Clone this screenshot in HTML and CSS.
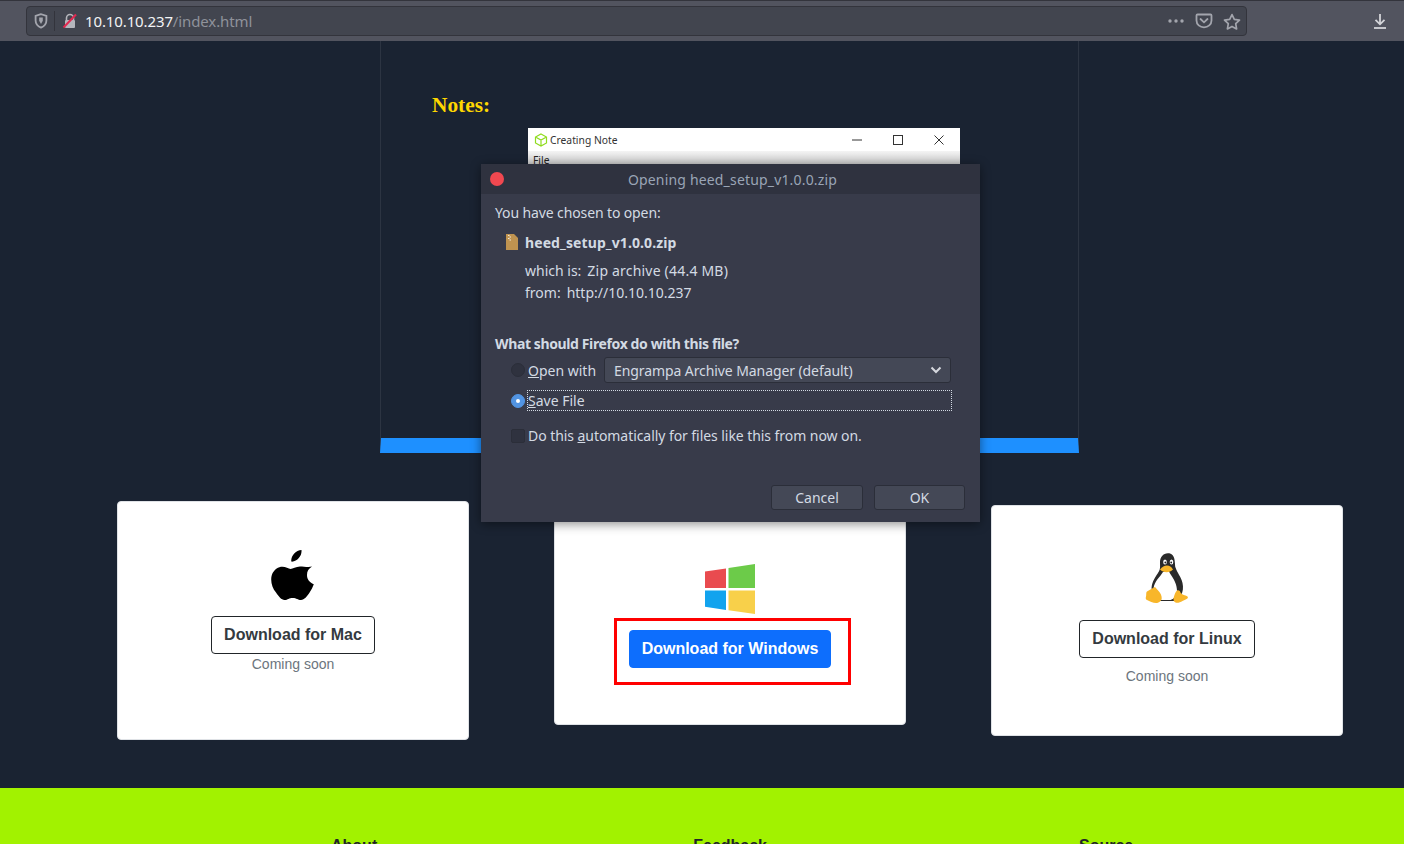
FILE: index.html
```html
<!DOCTYPE html>
<html lang="en">
<head>
	<meta charset="UTF-8">
	<title>10.10.10.237/index.html</title>
	<link rel="stylesheet" href="styles.css">
</head>
<body>
	<div class="toolbar">
		<div class="urlbar">
			<span class="url-icon">
				<svg width="14" height="16" viewBox="0 0 14 16"><path d="M7 1.200 1.600 2.800v4.600c0 3.400 2.300 5.800 5.400 7.200 3.100-1.400 5.400-3.800 5.400-7.200V2.800z" fill="none" stroke="#a3a5ad" stroke-width="1.800"/><path d="M5.200 4.600h3.600v3.200L7 11 5.200 7.800z" fill="#a3a5ad"/></svg>
			</span>
			<span class="url-sep"></span>
			<span class="url-lock">
				<svg width="16" height="16" viewBox="0 0 16 16"><path d="M4.500 7V5a3.500 3.500 0 0 1 7 0v2" fill="none" stroke="#b5b6bc" stroke-width="1.600"/><rect x="3" y="7" width="10" height="8" rx="1" fill="#b5b6bc"/><path d="M1.500 14.500 14 1.500" stroke="#e22850" stroke-width="2"/></svg>
			</span>
			<span class="url-text">10.10.10.237<span class="url-path">/index.html</span></span>
			<span class="url-actions">
				<svg width="18" height="16" viewBox="0 0 18 16"><circle cx="3" cy="8" r="1.700" fill="#a3a5ad"/><circle cx="9" cy="8" r="1.700" fill="#a3a5ad"/><circle cx="15" cy="8" r="1.700" fill="#a3a5ad"/></svg>
				<svg width="18" height="16" viewBox="0 0 18 16"><path d="M2.500 1.500h13c.6 0 1 .4 1 1v5c0 4-3.400 6.800-7.500 6.800S1.500 11.500 1.500 7.500v-5c0-.6.400-1 1-1z" fill="none" stroke="#a3a5ad" stroke-width="1.800"/><path d="M5.500 6 9 9.300 12.500 6" fill="none" stroke="#a3a5ad" stroke-width="1.800" stroke-linecap="round"/></svg>
				<svg width="18" height="17" viewBox="0 0 18 17"><path d="m9 1.600 2.300 4.800 5.200.7-3.800 3.600.9 5.200L9 13.400l-4.600 2.500.9-5.200L1.500 7.100l5.200-.7z" fill="none" stroke="#a3a5ad" stroke-width="1.700" stroke-linejoin="round"/></svg>
			</span>
		</div>
		<span class="download-btn">
			<svg width="14" height="16" viewBox="0 0 14 16"><path d="M7 1v10M2.500 6.800 7 11.300l4.500-4.500" fill="none" stroke="#d4d5d9" stroke-width="1.800"/><path d="M1 15h12" stroke="#d4d5d9" stroke-width="1.800"/></svg>
		</span>
	</div>

	<div class="page">
		<div class="notes">
			<h3 class="notes-title">Notes:</h3>
			<div class="shot">
				<div class="shot-title">
					<svg width="14" height="14" viewBox="0 0 14 14"><path d="M7 1 12.500 4v6L7 13 1.500 10V4zM1.500 4 7 7l5.500-3M7 7v6" fill="none" stroke="#8fdc1e" stroke-width="1.200"/></svg>
					<span class="shot-name">Creating Note</span>
					<span class="shot-controls">
						<svg width="10" height="10" viewBox="0 0 10 10"><path d="M0 5h10" stroke="#333" stroke-width="1"/></svg>
						<svg width="10" height="10" viewBox="0 0 10 10"><rect x=".5" y=".5" width="9" height="9" fill="none" stroke="#333"/></svg>
						<svg width="10" height="10" viewBox="0 0 10 10"><path d="m.5.500 9 9m0-9-9 9" stroke="#333"/></svg>
					</span>
				</div>
				<div class="shot-menu">File</div>
			</div>
		</div>

		<div class="cards">
			<div class="card card-mac">
				<svg class="os-icon" width="44" height="52" viewBox="0 0 44 52"><path d="M30.500 1c.3 3.200-.9 6-2.700 8.100-1.900 2.200-4.600 3.800-7.500 3.500-.4-3 1-6 2.700-7.900C24.900 2.500 28 1.100 30.500 1zM41 17.600c-3.300 2-5 4.800-5 8.300 0 4.200 2.300 7.300 6.800 9.300-1 3-2.400 5.800-4.200 8.400-2.600 3.900-5.200 7.300-8.600 7.400-3.300 0-4.400-2-8.200-2-3.800 0-5 1.900-8.100 2.100-3.300.1-6-3.600-8.700-7.500C.5 38.600-1.200 29.900 1.500 24.300c2-3.800 5.800-6.500 9.900-6.500 3.300 0 6.100 2.200 8.200 2.200 2 0 5.400-2.500 9.400-2.500 3.700 0 8.400 1 12 .1z" fill="#000"/></svg>
				<a class="btn btn-outline">Download for Mac</a>
				<p class="soon">Coming soon</p>
			</div>
			<div class="card card-win">
				<svg class="os-icon" width="50" height="50" viewBox="0 0 50 50"><path d="M0 7.500 21 4.400v19.700H0z" fill="#e94b4f"/><path d="M23.500 4 50 0v24.100H23.500z" fill="#6ccb49"/><path d="M0 26.500h21v19.400L0 42.800z" fill="#12a3ee"/><path d="M23.500 26.500H50V50l-26.500-3.700z" fill="#f8d04a"/></svg>
				<div class="highlight"><a class="btn btn-primary">Download for Windows</a></div>
			</div>
			<div class="card card-linux">
				<svg class="os-icon" width="44" height="52" viewBox="0 0 44 52">
					<path d="M23 1.300c-5 0-8 4-8 9 0 4 .5 6-1 9-3 5-7 10-7.500 17L12 49h19l5-6c2-3 2.500-8 1.500-12-1.200-6-5.500-10.500-7-15.500-1-4 .5-14.200-7.500-14.200z" fill="#2a2a2a"/>
					<path d="M18 20c-3 5-8.500 9-9.500 16.500-.5 5 3 10.500 8 11.500h9c3-1 6.500-4 6.500-9 0-6-2.500-10.500-5-14.500-2-3-3-4.500-3-5.500z" fill="#fff"/>
					<ellipse cx="20" cy="10" rx="1.800" ry="2.600" fill="#fff"/><ellipse cx="26.500" cy="10" rx="1.800" ry="2.600" fill="#fff"/>
					<circle cx="20.300" cy="10.500" r=".9" fill="#222"/><circle cx="26.200" cy="10.500" r=".9" fill="#222"/>
					<path d="M15 17.500c2-2.500 4.500-4 7-4s4.500 1.500 6 4c-2 1.700-4 2.800-6.500 2.800s-4.500-1.100-6.500-2.800z" fill="#f8b62a"/>
					<path d="M10 35l4 4.500c1.500 2 3 4.500 2.700 7-.3 2.500-3 4.500-5.700 4.500-3 0-6.500-2-9-3-1.300-.7-1.500-1.500-1-3.500.4-1.500 0-3 .5-4.500.5-1 2-1 3-2 1.500-1 3.500-2 5.500-3z" fill="#f8b62a"/>
					<path d="M32 38.500c1.500-.5 3 0 3.500 2 .5 1.500 2.500 2.300 5 3 1.800.6 2.800 1.500 2.300 2.500-.5 1.200-3.300 2-5.300 3-2.300 1.200-5 2.500-7 1.500-2.300-1.200-2.500-3.500-1.500-6 .5-2 1.500-4.500 3-6z" fill="#f8b62a"/>
				</svg>
				<a class="btn btn-outline">Download for Linux</a>
				<p class="soon">Coming soon</p>
			</div>
		</div>

		<div class="footer">
			<h5 class="footer-col">About</h5>
			<h5 class="footer-col">Feedback</h5>
			<h5 class="footer-col">Source</h5>
		</div>
	</div>

	<div class="dialog">
		<div class="dialog-title">
			<span class="dot"></span>
			<span class="dialog-name">Opening heed_setup_v1.0.0.zip</span>
		</div>
		<div class="dialog-body">
			<div class="chosen">You have chosen to open:</div>
			<div class="file-row">
				<svg width="12" height="16" viewBox="0 0 12 16"><path d="M0 0h8l4 4v12H0z" fill="#bf9350"/><path d="M2 1h1.500v1H2zM3.500 2.500H5v1H3.500zM2 4h1.500v1H2zM3.500 5.500H5v1H3.500z" fill="#f3ead8"/></svg>
				<b class="file-name">heed_setup_v1.0.0.zip</b>
			</div>
			<div class="file-info">
				<div><span class="file-key">which is:</span><span class="file-type">Zip archive (44.4 MB)</span></div>
				<div><span class="file-key">from:</span>http://10.10.10.237</div>
			</div>
			<div class="question">What should Firefox do with this file?</div>
			<div class="option-open">
				<span class="radio"></span>
				<span class="option-label open-label"><u>O</u>pen with</span>
				<div class="select">
					<span class="select-value">Engrampa Archive Manager (default)</span>
					<svg width="12" height="8" viewBox="0 0 12 8"><path d="m1.500 1.500 4.500 4.500 4.500-4.500" fill="none" stroke="#d6d8de" stroke-width="2"/></svg>
				</div>
			</div>
			<div class="option-save">
				<span class="radio radio-on"></span>
				<span class="save-label"><u>S</u>ave File</span>
			</div>
			<div class="option-auto">
				<span class="checkbox"></span>
				<span class="option-label auto-label">Do this <u>a</u>utomatically for files like this from now on.</span>
			</div>
			<div class="dialog-buttons">
				<span class="dialog-btn btn-cancel">Cancel</span>
				<span class="dialog-btn btn-ok">OK</span>
			</div>
		</div>
	</div>
</body>
</html>
```

FILE: styles.css
```css
*{ margin: 0; padding: 0; box-sizing: border-box; }
html, body{ height: 100%; overflow: hidden; }
body{ width: 1404px; height: 844px; background: #1a2332; font-family: "Liberation Sans", Arial, sans-serif; position: relative; }

/* browser toolbar */
.toolbar{ height: 41px; background: #52545f; display: flex; align-items: center; padding: 0 17px 0 26px; border-top: 1px solid #33343c; }
.urlbar{ width: 1221px; height: 30px; background: #42454f; border: 1px solid #33343c; border-radius: 4px; display: flex; align-items: center; font: 15px "Noto Sans", sans-serif; letter-spacing: -.12px; }
.url-icon{ width: 27px; display: flex; justify-content: center; padding-left: 1px; }
.url-sep{ width: 1px; height: 20px; background: #33343c; }
.url-lock{ width: 30px; display: flex; justify-content: center; }
.url-text{ color: #f2f3f5; }
.url-path{ color: #8f929b; }
.url-actions{ margin-left: auto; display: flex; align-items: center; gap: 10px; padding-right: 5px; }
.download-btn{ margin-left: auto; display: flex; }

/* page */
.page{ height: 803px; display: flex; flex-direction: column; }
.notes{ flex: none; width: 699px; height: 412px; margin-left: 380px; border-left: 1px solid #2c3442; border-right: 1px solid #2c3442; border-bottom: 15px solid #1e90ff; padding: 53px 0 0 51px; overflow: hidden; }
.notes-title{ font: bold 21.33px "Liberation Serif", serif; color: #ffd700; line-height: 23px; }
.shot{ width: 432px; height: 60px; margin: 11px 0 0 96px; background: #fff; }
.shot-title{ height: 23px; display: flex; align-items: center; padding: 0 16px 0 6px; gap: 2px; font: 10.3px "Noto Sans", sans-serif; color: #333; }
.shot-controls{ margin-left: auto; display: flex; gap: 31px; }
.shot-menu{ height: 37px; padding: 2px 5px; font: 10.3px "Noto Sans", sans-serif; color: #222; background: linear-gradient(#f4f4f4, #c9c9c9 14px); }

/* download cards */
.cards{ flex: none; height: 335px; display: flex; align-items: flex-start; padding-left: 117px; }
.card{ width: 352px; background: #fff; border: 1px solid #dfe2e6; border-radius: 4px; display: flex; flex-direction: column; align-items: center; }
.card-mac{ height: 239px; margin-top: 48px; padding-top: 47px; }
.card-win{ height: 209px; margin: 63px 0 0 85px; padding-top: 47px; }
.card-linux{ height: 231px; margin: 52px 0 0 85px; padding-top: 46px; }
.os-icon{ display: block; }
.btn{ display: block; font-size: 16px; font-weight: bold; line-height: 24px; padding: 6px 12px; border-radius: 4px; }
.btn-outline{ margin-top: 15px; border: 1px solid #212529; color: #343a40; }
.card-linux .btn-outline{ margin-top: 16px; }
.btn-primary{ background: #0d6efd; border: 1px solid #0d6efd; color: #fff; }
.highlight{ margin: 4px 0 0 4px; width: 237px; height: 67px; border: 3px solid #f00; padding: 9px 4px 0 0; display: flex; align-items: flex-start; justify-content: center; }
.soon{ font-size: 14px; line-height: 21px; color: #6c757d; }
.card-linux .soon{ margin-top: 8px; }

/* footer */
.footer{ flex: 1; background: #a2f200; display: flex; padding: 48px 0 0 331px; }
.footer-col{ font-size: 16px; line-height: 20px; color: #212529; }
.footer-col:nth-child(2){ margin-left: 316px; }
.footer-col:nth-child(3){ margin-left: 312px; }

/* firefox dialog */
.dialog{ position: absolute; left: 481px; top: 164px; width: 499px; height: 358px; background: #383b4a; box-shadow: 0 2px 10px rgba(0,0,0,.45); font: 14px/20px "Noto Sans", sans-serif; color: #d3dae3; display: flex; flex-direction: column; }
.dialog-title{ height: 30px; background: #2f323f; display: flex; align-items: center; justify-content: center; position: relative; color: #9aa5b6; }
.dot{ position: absolute; left: 9px; top: 8px; width: 14px; height: 14px; border-radius: 50%; background: #f14850; }
.dialog-name{ padding: 1px 0 0 4px; letter-spacing: .17px; }
.dialog-body{ flex: 1; padding: 9px 14px 0; display: flex; flex-direction: column; }
.chosen{ letter-spacing: -.12px; }
.file-row{ display: flex; align-items: center; gap: 7px; margin: 10px 0 0 11px; height: 20px; }
.file-row svg{ margin-top: -3px; }
.file-name{ letter-spacing: .1px; }
.file-info{ margin: 7px 0 0 30px; line-height: 22px; }
.file-key{ margin-right: 6px; }
.file-type{ letter-spacing: .2px; }
.question{ margin-top: 30px; font-weight: bold; letter-spacing: -.38px; }
.option-open{ display: flex; align-items: center; height: 26px; margin: 3px 0 0 16px; }
.radio{ width: 14px; height: 14px; border-radius: 50%; background: #2f323f; border: 1px solid #2b2e39; flex: none; }
.radio-on{ background: #5294e2; border-color: #5294e2; position: relative; }
.radio-on::after{ content: ""; position: absolute; left: 4px; top: 4px; width: 4px; height: 4px; border-radius: 50%; background: #fff; }
.option-label{ margin-left: 3px; }
.open-label{ padding-top: 1px; }
.select{ width: 347px; height: 26px; margin-left: 8px; background: #444856; border: 1px solid #2b2e39; border-radius: 3px; display: flex; align-items: center; justify-content: space-between; padding: 0 8px 0 9px; }
.select-value{ padding-top: 1px; letter-spacing: -.09px; }
.option-save{ display: flex; align-items: center; height: 21px; margin: 7px 14px 0 16px; }
.save-label{ flex: 1; margin-left: 2px; height: 21px; border: 1px dotted #d3dae3; line-height: 19px; }
.option-auto{ display: flex; align-items: center; height: 20px; margin: 15px 0 0 16px; }
.auto-label{ letter-spacing: -.06px; }
.checkbox{ width: 14px; height: 14px; border-radius: 2px; background: #2f323f; border: 1px solid #2b2e39; flex: none; }
.dialog-buttons{ margin: auto 1px 12px 0; display: flex; justify-content: flex-end; gap: 11px; }
.dialog-btn{ height: 25px; background: #444856; border: 1px solid #2b2e39; border-radius: 3px; text-align: center; line-height: 23px; }
.btn-cancel{ width: 92px; }
.btn-ok{ width: 91px; }
```
